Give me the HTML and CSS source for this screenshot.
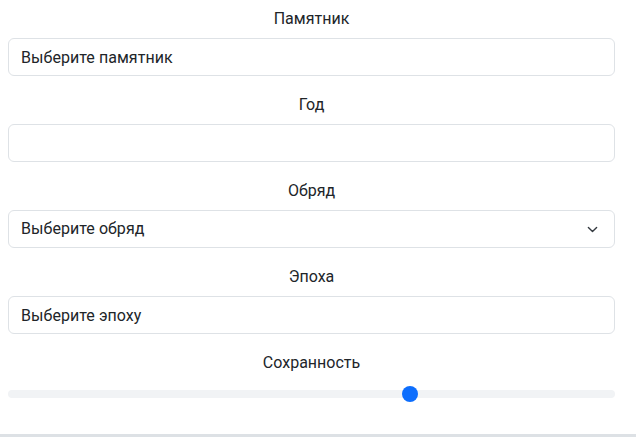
FILE: index.html
```html
<!DOCTYPE html>
<html lang="ru">
<head>
<meta charset="utf-8">
<link rel="stylesheet" href="styles.css">
</head>
<body>
<form class="form">
  <div class="field">
    <label class="form-label">Памятник</label>
    <input class="form-control" type="text" value="Выберите памятник">
  </div>
  <div class="field">
    <label class="form-label">Год</label>
    <input class="form-control" type="text" value="">
  </div>
  <div class="field">
    <label class="form-label">Обряд</label>
    <select class="form-select"><option>Выберите обряд</option></select>
  </div>
  <div class="field">
    <label class="form-label">Эпоха</label>
    <input class="form-control" type="text" value="Выберите эпоху">
  </div>
  <div class="field">
    <label class="form-label">Сохранность</label>
    <input class="form-range" type="range" min="0" max="3" value="2">
  </div>
</form>
<div class="divider"></div>
</body>
</html>
```
FILE: styles.css
```css
* { box-sizing: border-box; }
html, body { margin: 0; padding: 0; }
body {
  font-family: Roboto, "Liberation Sans", sans-serif;
  font-size: 16px;
  line-height: 1.5;
  color: #212529;
  background: #fff;
  overflow: hidden;
}
.form {
  width: 607px;
  margin: 6px 0 0 8px;
  display: flex;
  flex-direction: column;
  gap: 16px;
}
.field {
  display: flex;
  flex-direction: column;
}
.form-label {
  display: block;
  text-align: center;
  padding-top: 1px;
  margin-bottom: 7px;
}
.form-control, .form-select {
  display: block;
  width: 100%;
  height: 38px;
  padding: 6px 12px;
  font: inherit;
  letter-spacing: 0.05px;
  color: #212529;
  background-color: #fff;
  border: 1px solid #dee2e6;
  border-radius: 6px;
  outline: none;
}
.form-select {
  appearance: none;
  -webkit-appearance: none;
  padding-right: 36px;
  background-image: url("data:image/svg+xml,%3csvg xmlns='http://www.w3.org/2000/svg' viewBox='0 0 16 16'%3e%3cpath fill='none' stroke='%23343a40' stroke-linecap='round' stroke-linejoin='round' stroke-width='2' d='m2 5 6 6 6-6'/%3e%3c/svg%3e");
  background-repeat: no-repeat;
  background-position: right 16px center;
  background-size: 11px 11px;
}
.form-range {
  display: block;
  width: 100%;
  height: 24px;
  margin: 0;
  padding: 0;
  background: transparent;
  appearance: none;
  -webkit-appearance: none;
}
.form-range::-webkit-slider-runnable-track {
  height: 8px;
  background: #f1f3f5;
  border-radius: 16px;
}
.form-range::-webkit-slider-thumb {
  -webkit-appearance: none;
  width: 16px;
  height: 16px;
  margin-top: -4px;
  background: #0d6efd;
  border: 0;
  border-radius: 50%;
}
.divider {
  margin-top: 28px;
  height: 3px;
  background: #dde1e5;
}
```
